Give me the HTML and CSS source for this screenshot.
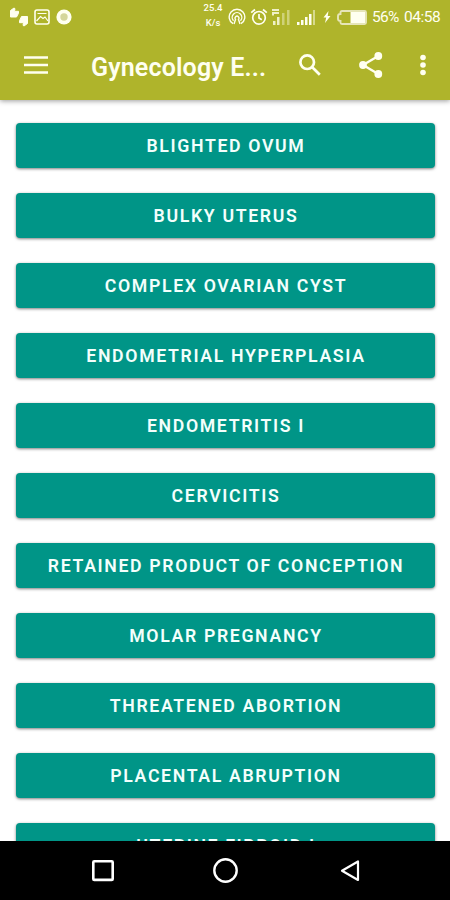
FILE: index.html
```html
<!DOCTYPE html>
<html lang="en">
<head>
<meta charset="utf-8">
<meta name="viewport" content="width=device-width, initial-scale=1.0">
<title>Gynecology</title>
<link rel="stylesheet" href="styles.css">
</head>
<body>
<div class="app">
  <header class="header">
    <div class="status">
      <div class="status-left">
        <svg width="20" height="20" viewBox="0 0 20 20"><path d="M1.500 3.500L5 1l1 .7-.5 2.600h4v2L7.500 10H1.500zM18.500 16.500L15 19l-1-.7.500-2.600h-4v-2L12.500 9.500h6z" fill="currentColor" stroke="currentColor" stroke-linejoin="round"/></svg>
        <svg width="16" height="16" viewBox="0 0 16 16" fill="none" stroke="currentColor" stroke-width="1.600"><rect x="1" y="1" width="14" height="14" rx="2"/><path d="M2.500 12l4-4.500 2.500 2 2-1.500 3 4M3.500 4.500h9" stroke-width="1.200"/></svg>
        <svg width="16" height="16" viewBox="0 0 16 16"><circle cx="8" cy="8" r="7.600" fill="currentColor"/><circle cx="8" cy="8" r="3.700" fill="#d5d69a"/></svg>
      </div>
      <div class="status-right">
        <div class="speed"><span>25.4</span><span>K/s</span></div>
        <svg class="hotspot" width="18" height="18" viewBox="0 0 18 18" fill="none" stroke="currentColor" stroke-width="1.400"><path d="M5 15.700A7.800 7.800 0 1 1 13 15.700"/><path d="M5.500 12.700A4.800 4.800 0 1 1 12.500 12.700"/><path d="M6 16l1.500-4.500a2 2 0 1 1 3 0L12 16"/></svg>
        <svg class="alarm" width="18" height="18" viewBox="0 0 18 18" fill="none" stroke="currentColor" stroke-width="1.700"><circle cx="9" cy="9.800" r="6.300"/><path d="M1.200 4.700L5 1.500M16.800 4.700L13 1.500M9 6v4l2.800 1.700"/></svg>
        <svg class="signal" width="20" height="17" viewBox="0 0 20 17" fill="currentColor"><path d="M1 0h7v2H1zM1 3h7v2H3v1.500H1zM2 12h2.500v4H2zM6 8h2.500v8H6z" opacity=".8"/><path d="M11 4h2.500v12H11zM16 1h2.500v15H16z" opacity=".4"/></svg>
        <svg class="signal-2" width="20" height="17" viewBox="0 0 20 17" fill="currentColor"><path d="M1 13h2.500v3H1zM5 11h2.500v5H5zM9 8h2.500v8H9zM13 5h2.500v11H13z"/><path d="M17 1h2v15h-2z" opacity=".5"/></svg>
        <svg class="bolt" width="8" height="12" viewBox="0 0 8 12"><path d="M5.500 0L.5 6.500h2.700L2 12l5.500-7H4.700z" fill="currentColor"/></svg>
        <svg class="battery" width="30" height="15" viewBox="0 0 30 15"><path d="M5 1h22.500q1.500 0 1.500 1.500v10q0 1.500-1.500 1.500H5q-1.500 0-1.500-1.500V11Q1 11 1 9V6q0-2 2.500-2V2.500Q3.500 1 5 1z" fill="none" stroke="#e6e5b8" stroke-width="1.900"/><path d="M13.500 2h14.500v11H13.500z" fill="currentColor"/></svg>
        <span class="percent">56%</span>
        <span class="clock">04:58</span>
      </div>
    </div>
    <div class="toolbar">
      <svg class="menu" width="24" height="18" viewBox="0 0 24 18"><path d="M0 1.500h24M0 9h24M0 16.500h24" stroke="currentColor" stroke-width="2.700"/></svg>
      <h1 class="title">Gynecology E...</h1>
      <svg class="search" width="22" height="22" viewBox="0 0 22 22" fill="none" stroke="currentColor" stroke-width="2.700"><circle cx="8.200" cy="8.200" r="6.800"/><path d="M13 13l7.800 7.800"/></svg>
      <svg class="share" width="24" height="26" viewBox="0 0 24 26"><path d="M19.300 4L4 13l15.300 9" fill="none" stroke="currentColor" stroke-width="2.400"/><g fill="currentColor"><circle cx="19.300" cy="4" r="3.900"/><circle cx="4" cy="13" r="3.900"/><circle cx="19.300" cy="22" r="3.900"/></g></svg>
      <svg class="more" width="6" height="22" viewBox="0 0 6 22" fill="currentColor"><circle cx="3" cy="3.500" r="2.800"/><circle cx="3" cy="11" r="2.800"/><circle cx="3" cy="18.500" r="2.800"/></svg>
    </div>
  </header>

  <main class="list">
    <button class="btn">Blighted Ovum</button>
    <button class="btn">Bulky Uterus</button>
    <button class="btn">Complex Ovarian Cyst</button>
    <button class="btn">Endometrial Hyperplasia</button>
    <button class="btn">Endometritis I</button>
    <button class="btn">Cervicitis</button>
    <button class="btn">Retained Product of Conception</button>
    <button class="btn">Molar Pregnancy</button>
    <button class="btn">Threatened Abortion</button>
    <button class="btn">Placental Abruption</button>
    <button class="btn">Uterine Fibroid I</button>
  </main>

  <nav class="navbar">
    <svg width="24" height="24" viewBox="0 0 24 24" fill="none" stroke="currentColor" stroke-width="2.600"><rect x="2.300" y="2.300" width="19.400" height="18.600" rx="1"/></svg>
    <svg width="26" height="26" viewBox="0 0 26 26" fill="none" stroke="currentColor" stroke-width="2.400"><circle cx="12.500" cy="12.500" r="11.200"/></svg>
    <svg width="24" height="24" viewBox="0 0 24 24" fill="none" stroke="currentColor" stroke-width="2.200" stroke-linejoin="round"><path d="M21 2.500v18.500L5 11.700z"/></svg>
  </nav>
</div>
</body>
</html>
```
FILE: styles.css
```css
* { box-sizing: border-box; }
body { margin: 0; background: #fff; font-family: Roboto, "Liberation Sans", sans-serif; }
svg { display: block; flex: none; }

.app {
  display: flex;
  flex-direction: column;
  height: 900px;
  overflow: hidden;
}

.header {
  flex: none;
  height: 100px;
  background: #afb42b;
  color: #fffff0;
  box-shadow: 0 1px 5px rgba(0, 0, 0, 0.4);
}

.status {
  display: flex;
  justify-content: space-between;
  height: 34px;
  padding: 0 10px 0 9px;
  font-size: 15.5px;
}
.status-left { display: flex; align-items: center; gap: 6px; }
.status-left svg:first-child { margin-right: -1px; }
.status-right { display: flex; align-items: center; }
.speed {
  display: flex;
  flex-direction: column;
  align-items: center;
  width: 20px;
  padding-bottom: 4px;
  font-size: 9.5px;
  font-weight: 500;
  line-height: 15px;
}
.hotspot { margin-left: 5px; }
.alarm { margin-left: 4px; }
.signal { margin-left: 3px; }
.signal-2 { margin-left: 5px; }
.bolt { margin-left: 7px; }
.battery { margin-left: 6px; }
.percent { width: 27px; margin-left: 5px; letter-spacing: -0.7px; }
.clock { width: 36px; margin-left: 5px; letter-spacing: -0.5px; }

.toolbar {
  display: flex;
  align-items: center;
  height: 62px;
  padding: 0 24px;
}
.title {
  width: 180px;
  margin: 4px 0 0 43px;
  font-size: 25px;
  font-weight: 600;
  letter-spacing: 0.15px;
  white-space: nowrap;
}
.search { margin-left: 28px; }
.share { margin-left: 38px; }
.more { margin-left: 37px; }

.list {
  flex: 1;
  min-height: 0;
  display: flex;
  flex-direction: column;
  gap: 25px;
  padding: 23px 15px 0 16px;
  overflow: hidden;
}
.btn {
  flex: none;
  height: 45px;
  padding: 0 0 0 1px;
  border: none;
  border-radius: 4px;
  background: #009587;
  color: #f3fffc;
  font-family: inherit;
  font-size: 17.7px;
  font-weight: 600;
  letter-spacing: 1.65px;
  text-transform: uppercase;
  white-space: nowrap;
  box-shadow: 0 1px 3px rgba(0, 0, 0, 0.5);
}

.navbar {
  flex: none;
  display: flex;
  align-items: center;
  justify-content: center;
  gap: 98px;
  height: 59px;
  padding-left: 1px;
  background: #000;
  color: #fff;
}
```
